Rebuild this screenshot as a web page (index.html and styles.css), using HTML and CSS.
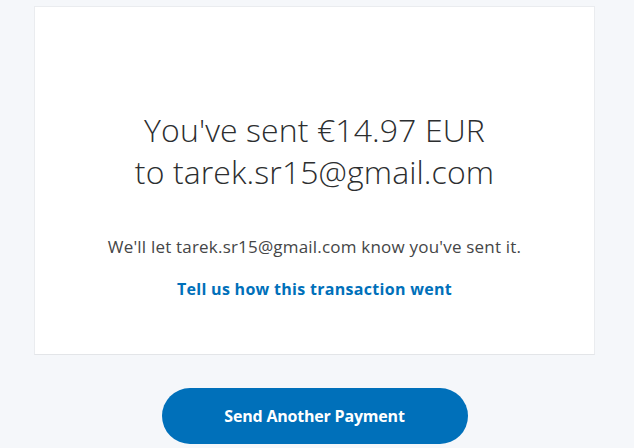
FILE: index.html
```html
<!DOCTYPE html>
<html lang="en">
<head>
    <meta charset="UTF-8">
    <title>Payment sent</title>
    <link rel="stylesheet" href="styles.css">
</head>
<body>
    <div class="page">
        <div class="card">
            <h1 class="title">You've sent €14.97 EUR<br>to tarek.sr15@gmail.com</h1>
            <p class="note">We'll let tarek.sr15@gmail.com know you've sent it.</p>
            <a class="feedback" href="#">Tell us how this transaction went</a>
        </div>
        <button class="send-btn">Send Another Payment</button>
    </div>
</body>
</html>
```

FILE: styles.css
```css
* {
    margin: 0;
    padding: 0;
    box-sizing: border-box;
}

body {
    background: #f5f7fa;
    font-family: 'Open Sans', sans-serif;
    color: #2c2e2f;
}

.page {
    display: flex;
    flex-direction: column;
    align-items: center;
    padding-top: 6px;
    padding-right: 5px;
}

/* white summary card */
.card {
    width: 561px;
    height: 349px;
    background: #fff;
    border: 1px solid #eaecef;
    border-bottom-color: #e3e5e8;
    display: flex;
    flex-direction: column;
    align-items: center;
    padding-top: 102px;
}

.title {
    font-size: 32px;
    font-weight: 300;
    line-height: 42px;
    letter-spacing: 0.1px;
    text-align: center;
    color: #2c2e2f;
}

.note {
    margin-top: 42px;
    font-size: 17px;
    line-height: 24px;
    letter-spacing: 0.2px;
    color: #454647;
}

.feedback {
    margin-top: 19px;
    font-size: 16px;
    line-height: 22px;
    font-weight: 700;
    letter-spacing: 0.3px;
    color: #0070ba;
    text-decoration: none;
}

/* primary action */
.send-btn {
    margin-top: 33px;
    width: 306px;
    height: 56px;
    border: none;
    border-radius: 28px;
    background: #0070ba;
    color: #fff;
    font-family: 'Open Sans', sans-serif;
    font-size: 16px;
    font-weight: 700;
    letter-spacing: -0.2px;
    cursor: pointer;
}
```
